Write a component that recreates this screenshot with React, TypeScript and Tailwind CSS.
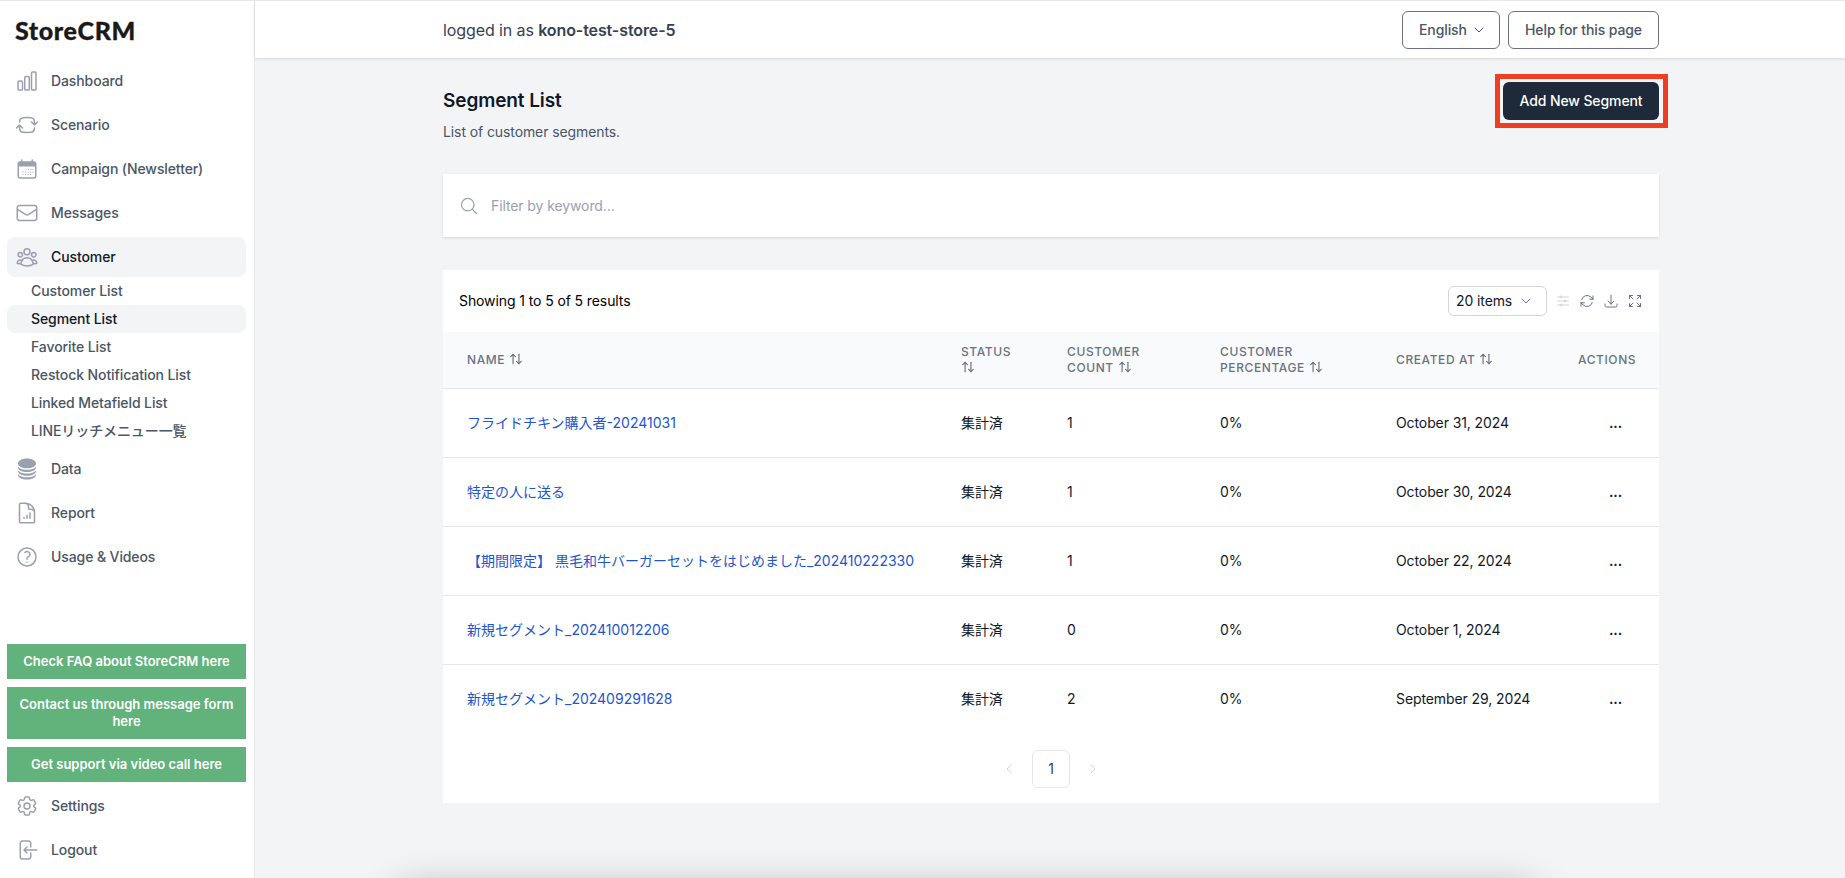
import { ArrowUpDown, ChevronDown, ChevronLeft, ChevronRight } from "lucide-react";
import type { ComponentType } from "react";
import {
  HiCircleStack,
  HiOutlineAdjustmentsHorizontal,
  HiOutlineArrowDownTray,
  HiOutlineArrowLeftOnRectangle,
  HiOutlineArrowPath,
  HiOutlineArrowPathRoundedSquare,
  HiOutlineArrowsPointingOut,
  HiOutlineChartBar,
  HiOutlineCog6Tooth,
  HiOutlineDocumentChartBar,
  HiOutlineEnvelope,
  HiOutlineMagnifyingGlass,
  HiOutlineQuestionMarkCircle,
  HiOutlineUserGroup,
} from "react-icons/hi2";

type NavProps = {
  icon: ComponentType<{ className?: string }>;
  name: string;
  active?: boolean;
};

const CUSTOMER_LINKS = [
  "Customer List",
  "Segment List",
  "Favorite List",
  "Restock Notification List",
  "Linked Metafield List",
  "LINEリッチメニュー一覧",
];

const SEGMENTS = [
  { name: "フライドチキン購入者-20241031", count: 1, created: "October 31, 2024" },
  { name: "特定の人に送る", count: 1, created: "October 30, 2024" },
  { name: "【期間限定】 黒毛和牛バーガーセットをはじめました_202410222330", count: 1, created: "October 22, 2024" },
  { name: "新規セグメント_202410012206", count: 0, created: "October 1, 2024" },
  { name: "新規セグメント_202409291628", count: 2, created: "September 29, 2024" },
];

// calendar with a solid header band, the outline set has no such icon
function CalendarIcon({ className }: { className?: string }) {
  return (
    <svg viewBox="0 0 24 24" fill="none" stroke="currentColor" strokeWidth={1.5} className={className}>
      <path strokeLinecap="round" d="M6.75 3v2.5M17.25 3v2.5" />
      <rect x="3.25" y="5" width="17.5" height="16" rx="2" />
      <path fill="currentColor" stroke="none" d="M3.25 7a2 2 0 0 1 2-2h13.5a2 2 0 0 1 2 2v2.5H3.25z" />
      <path
        strokeLinecap="round"
        strokeWidth={1.2}
        d="M13.5 12.5h.01M16 12.5h.01M18 12.5h.01M8 15h.01M10.5 15h.01M13 15h.01M15.5 15h.01M18 15h.01M8 17.5h.01M10.5 17.5h.01M13 17.5h.01M15.5 17.5h.01"
      />
    </svg>
  );
}

function NavItem({ icon: Icon, name, active }: NavProps) {
  return (
    <a
      href="#"
      className={`flex h-10 items-center rounded-lg px-2 text-sm font-medium ${
        active ? "bg-gray-100 text-gray-900" : "text-gray-600"
      }`}
    >
      <Icon className="mr-3 h-6 w-6 shrink-0 text-gray-400" />
      {name}
    </a>
  );
}

function GreenLink({ children }: { children: string }) {
  return (
    <a
      href="#"
      className="block bg-[#62b27c] px-2 py-[9px] text-center text-[13px] leading-[17px] font-semibold tracking-normal text-white"
    >
      {children}
    </a>
  );
}

function SortHead({ label, width }: { label: string; width: string }) {
  return (
    <th className={`${width} px-6 py-3 text-left text-xs leading-4 font-medium tracking-wider text-gray-500 uppercase`}>
      {label} <ArrowUpDown className="inline h-3.5 w-3.5 align-[-2px]" />
    </th>
  );
}

function Sidebar() {
  return (
    <aside className="flex w-[255px] shrink-0 flex-col border-r border-gray-200 bg-white pr-[8px] pb-2 pl-[7px]">
      <div className="flex h-[60px] items-start pt-[11px] pl-2 font-['Lato',sans-serif] text-[25px] leading-9 font-black tracking-[0.025em] text-[#1a1a1a] [-webkit-text-stroke:0.3px_#1a1a1a]">
        StoreCRM
      </div>
      <nav className="flex flex-1 flex-col">
        <div className="flex flex-col gap-1">
          <NavItem icon={HiOutlineChartBar} name="Dashboard" />
          <NavItem icon={HiOutlineArrowPathRoundedSquare} name="Scenario" />
          <NavItem icon={CalendarIcon} name="Campaign (Newsletter)" />
          <NavItem icon={HiOutlineEnvelope} name="Messages" />
          <NavItem icon={HiOutlineUserGroup} name="Customer" active />
        </div>
        <div className="mb-1">
          {CUSTOMER_LINKS.map((link) => (
            <a
              key={link}
              href="#"
              className={`flex h-7 items-center rounded-lg pl-6 text-sm font-medium ${
                link === "Segment List" ? "bg-gray-100 text-gray-900" : "text-gray-600"
              }`}
            >
              {link}
            </a>
          ))}
        </div>
        <div className="flex flex-col gap-1">
          <NavItem icon={HiCircleStack} name="Data" />
          <NavItem icon={HiOutlineDocumentChartBar} name="Report" />
          <NavItem icon={HiOutlineQuestionMarkCircle} name="Usage & Videos" />
        </div>
        <div className="mt-auto flex flex-col gap-2">
          <GreenLink>Check FAQ about StoreCRM here</GreenLink>
          <GreenLink>Contact us through message form here</GreenLink>
          <GreenLink>Get support via video call here</GreenLink>
        </div>
        <div className="mt-1 flex flex-col gap-1">
          <NavItem icon={HiOutlineCog6Tooth} name="Settings" />
          <NavItem icon={HiOutlineArrowLeftOnRectangle} name="Logout" />
        </div>
      </nav>
    </aside>
  );
}

function SegmentTable() {
  return (
    <div className="mt-[33px] bg-white">
      <div className="flex h-[62px] items-center justify-between pr-4 pl-4">
        <p className="text-sm text-black">Showing 1 to 5 of 5 results</p>
        <div className="flex items-center">
          <button className="mr-2 flex h-[30px] w-[99px] items-center justify-between rounded-md border border-gray-300 pr-3 pl-[7px] text-sm text-gray-900">
            20 items
            <ChevronDown className="h-4 w-4 text-gray-500" strokeWidth={1.5} />
          </button>
          <div className="flex items-center gap-2 text-gray-500">
            <HiOutlineAdjustmentsHorizontal className="h-4 w-4 text-gray-300" />
            <HiOutlineArrowPath className="h-4 w-4" />
            <HiOutlineArrowDownTray className="h-4 w-4" />
            <HiOutlineArrowsPointingOut className="h-4 w-4" />
          </div>
        </div>
      </div>
      <table className="w-full table-fixed border-collapse">
        <thead className="border-b border-gray-200 bg-gray-50">
          <tr className="h-[56px]">
            <SortHead label="Name" width="w-[494px]" />
            <SortHead label="Status" width="w-[106px]" />
            <SortHead label="Customer Count" width="w-[153px]" />
            <SortHead label="Customer Percentage" width="w-[176px]" />
            <SortHead label="Created At" width="w-[182px]" />
            <th className="w-[105px] py-3 pr-2 pl-6 text-left text-xs font-medium tracking-wider text-gray-500 uppercase">
              Actions
            </th>
          </tr>
        </thead>
        <tbody className="divide-y divide-gray-200">
          {SEGMENTS.map((s) => (
            <tr key={s.name} className="h-[69px] text-sm text-gray-900">
              <td className="pl-6 tracking-normal whitespace-nowrap">
                <a href="#" className="text-[#1d55d0]">
                  {s.name}
                </a>
              </td>
              <td className="px-6">集計済</td>
              <td className="px-6">{s.count}</td>
              <td className="px-6">0%</td>
              <td className="pl-6 whitespace-nowrap">{s.created}</td>
              <td className="pl-[55px] font-semibold">...</td>
            </tr>
          ))}
        </tbody>
      </table>
      <div className="flex h-[69px] items-start justify-center gap-[15px] pt-4 text-gray-300">
        <ChevronLeft className="mt-[11px] h-4 w-4" strokeWidth={1.5} />
        <span className="flex h-[38px] w-[38px] items-center justify-center rounded-md border border-gray-200 text-sm text-gray-700">
          1
        </span>
        <ChevronRight className="mt-[11px] h-4 w-4" strokeWidth={1.5} />
      </div>
    </div>
  );
}

export default function App() {
  return (
    <div className="relative flex h-screen overflow-hidden border-t border-gray-200 bg-gray-100 font-['Inter','Noto_Sans_CJK_JP',sans-serif] tracking-[-0.1px]">
      <Sidebar />
      <div className="min-w-0 flex-1">
        <header className="h-[57px] bg-white shadow-sm">
          <div className="ml-[156px] flex h-full max-w-7xl items-center justify-between px-8">
            <p className="text-base text-gray-700">
              logged in as <span className="font-semibold">kono-test-store-5</span>
            </p>
            <div className="flex gap-2">
              <button className="flex h-[38px] w-[98px] items-center justify-between rounded-md border border-gray-500 pr-3 pl-4 text-sm font-medium text-gray-600">
                English
                <ChevronDown className="h-4 w-4" strokeWidth={1.5} />
              </button>
              <button className="h-[38px] w-[151px] rounded-md border border-gray-500 text-sm font-medium text-gray-600">
                Help for this page
              </button>
            </div>
          </div>
        </header>
        <main className="ml-[156px] max-w-7xl px-8 pt-6">
          <div className="flex items-start justify-between">
            <div className="pt-[5px]">
              <h1 className="text-[19px] leading-7 font-semibold text-gray-900">Segment List</h1>
              <p className="mt-[7px] text-sm text-gray-600">List of customer segments.</p>
            </div>
            <div className="relative">
              <button className="h-[38px] w-[156px] rounded-md bg-gray-800 text-sm font-medium text-white">
                Add New Segment
              </button>
              <div className="absolute -top-2 -right-[9px] -bottom-2 -left-2 border-[5px] border-[#ee3f24]" />
            </div>
          </div>
          <div className="mt-8 flex h-[63px] items-center bg-white pl-4 shadow-sm">
            <HiOutlineMagnifyingGlass className="h-5 w-5 text-gray-400" />
            <input
              placeholder="Filter by keyword..."
              className="ml-3 flex-1 bg-transparent text-sm placeholder:text-gray-400 focus:outline-none"
            />
          </div>
          <SegmentTable />
        </main>
      </div>
      {/* shadow of a popup sitting just below the fold */}
      <div className="absolute top-[889px] left-[400px] h-10 w-[1135px] rounded-lg shadow-[0_0_40px_rgba(0,0,0,0.3)]" />
    </div>
  );
}
